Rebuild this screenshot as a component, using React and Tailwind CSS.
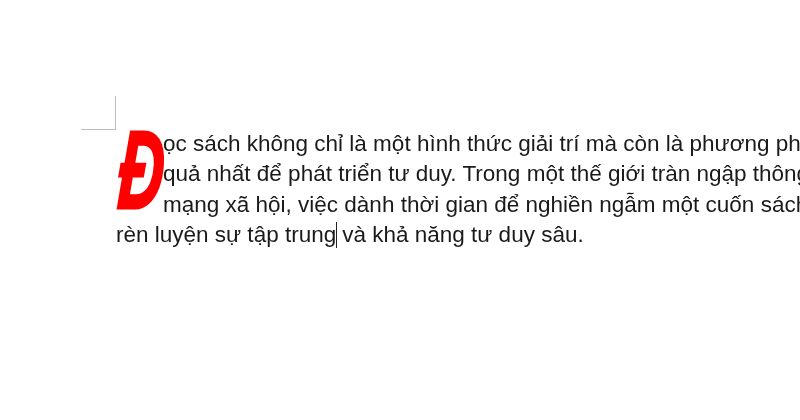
export default function App() {
  return (
    <div className="w-[800px] h-[420px] overflow-hidden bg-white relative font-['Liberation_Sans',Arial,sans-serif] blur-[0.35px]">
      <div className="absolute left-[81px] top-[96px] w-[35px] h-[34px] border-r border-b border-[#bdbdbd]" />
      <div className="pt-[129px] pl-[116px] w-[800px] text-[22.5px] leading-[30.4px] text-[#1a1a1a]">
        <div className="float-left w-[47px] h-[91px] relative">
          <span className="absolute left-[6px] top-[-14px] origin-top-left scale-x-[0.66] scale-y-[1.15] -skew-x-[6deg] font-bold italic text-[#ff0000] text-[96px] leading-[96px] [-webkit-text-stroke:2.5px_#ff0000]">Đ</span>
        </div>
        <div className="whitespace-nowrap">ọc sách không chỉ là một hình thức giải trí mà còn là phương ph</div>
        <div className="whitespace-nowrap">quả nhất để phát triển tư duy. Trong một thế giới tràn ngập thông</div>
        <div className="whitespace-nowrap">mạng xã hội, việc dành thời gian để nghiền ngẫm một cuốn sách</div>
        <div className="whitespace-nowrap clear-left flex items-center">
          <span>rèn luyện sự tập trung</span>
          <span className="w-px h-[26px] bg-[#222222] mr-[5px]" />
          <span>và khả năng tư duy sâu.</span>
        </div>
      </div>
    </div>
  );
}
